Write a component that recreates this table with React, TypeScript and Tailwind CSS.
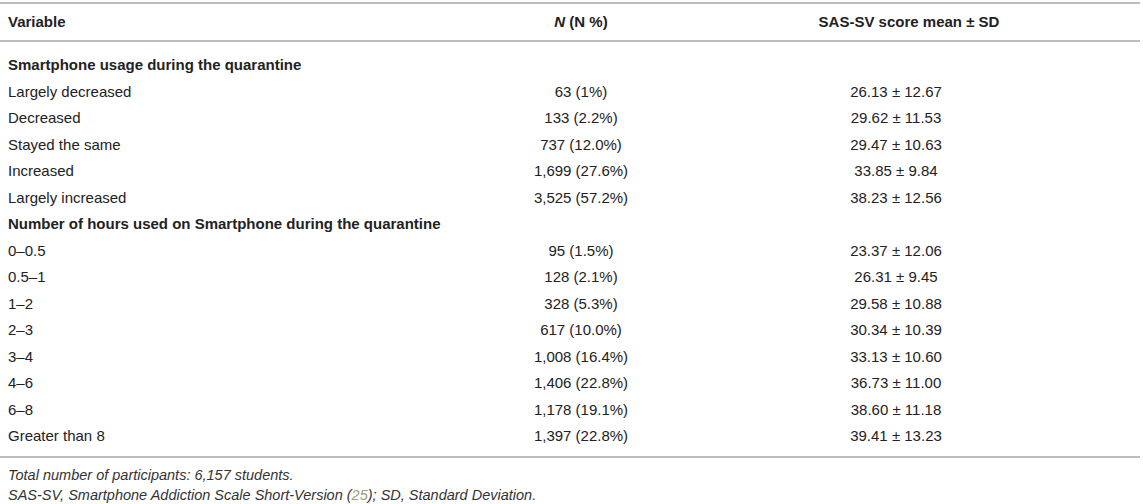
type Row = { label: string; n?: string; score?: string; section?: boolean }

const rows: Row[] = [
  { label: 'Smartphone usage during the quarantine', section: true },
  { label: 'Largely decreased', n: '63 (1%)', score: '26.13 ± 12.67' },
  { label: 'Decreased', n: '133 (2.2%)', score: '29.62 ± 11.53' },
  { label: 'Stayed the same', n: '737 (12.0%)', score: '29.47 ± 10.63' },
  { label: 'Increased', n: '1,699 (27.6%)', score: '33.85 ± 9.84' },
  { label: 'Largely increased', n: '3,525 (57.2%)', score: '38.23 ± 12.56' },
  { label: 'Number of hours used on Smartphone during the quarantine', section: true },
  { label: '0–0.5', n: '95 (1.5%)', score: '23.37 ± 12.06' },
  { label: '0.5–1', n: '128 (2.1%)', score: '26.31 ± 9.45' },
  { label: '1–2', n: '328 (5.3%)', score: '29.58 ± 10.88' },
  { label: '2–3', n: '617 (10.0%)', score: '30.34 ± 10.39' },
  { label: '3–4', n: '1,008 (16.4%)', score: '33.13 ± 10.60' },
  { label: '4–6', n: '1,406 (22.8%)', score: '36.73 ± 11.00' },
  { label: '6–8', n: '1,178 (19.1%)', score: '38.60 ± 11.18' },
  { label: 'Greater than 8', n: '1,397 (22.8%)', score: '39.41 ± 13.23' },
]

const cols = 'grid grid-cols-[440px_282px_348px_1fr]'

export default function App() {
  return (
    <div className="w-[1143px] h-[504px] overflow-hidden bg-white pt-[2px] text-[15px] text-[#222] font-['Liberation_Sans',Arial,sans-serif]">
      <div className="mr-[3px] border-t-2 border-[#bdbdbd]">
        {/* header */}
        <div className={`${cols} h-[38px] items-center font-bold border-b-2 border-[#bdbdbd]`}>
          <div className="pl-[8px]">Variable</div>
          <div className="text-center">
            <span className="italic">N</span> (N %)
          </div>
          <div className="text-center pl-[26px]">SAS-SV score mean ± SD</div>
          <div />
        </div>

        {/* body */}
        <div className="pt-[10px] pb-[6px] border-b-2 border-[#bdbdbd]">
          {rows.map((r) => (
            <div key={r.label} className={`${cols} h-[26.5px] items-center`}>
              <div className={`pl-[8px] whitespace-nowrap ${r.section ? 'font-bold' : ''}`}>{r.label}</div>
              <div className="text-center">{r.n}</div>
              <div className="text-center">{r.score}</div>
              <div />
            </div>
          ))}
        </div>
      </div>

      {/* notes */}
      <div className="pl-[8px] pt-[7px] italic text-[14.5px] text-[#333] leading-[20px]">
        <p>Total number of participants: 6,157 students.</p>
        <p>
          SAS-SV, Smartphone Addiction Scale Short-Version (<span className="text-[#9aa07a]">25</span>); SD, Standard
          Deviation.
        </p>
      </div>
    </div>
  )
}
